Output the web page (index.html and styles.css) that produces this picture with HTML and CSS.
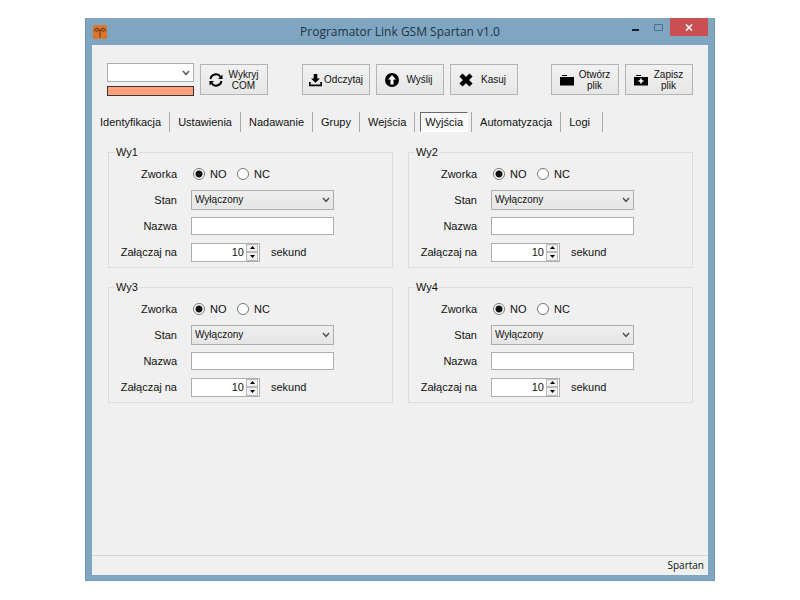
FILE: index.html
```html
<!DOCTYPE html>
<html lang="pl">
<head>
    <meta charset="UTF-8">
    <meta name="viewport" content="width=device-width, initial-scale=1.0">
    <title>Programator Link GSM Spartan v1.0</title>
    <link rel="stylesheet" href="styles.css">
</head>
<body>
    <svg width="0" height="0" class="defs" aria-hidden="true">
        <symbol id="chevron" viewBox="0 0 8 6"><path d="M1 1l3 3.400L7 1" fill="none" stroke="#505050" stroke-width="1.500"/></symbol>
        <symbol id="arrow-up" viewBox="0 0 5 3"><path d="M0 3L2.500 0L5 3z"/></symbol>
        <symbol id="arrow-down" viewBox="0 0 5 3"><path d="M0 0L2.500 3L5 0z"/></symbol>
    </svg>

    <div class="window">
        <header class="titlebar">
            <svg class="app-icon" width="14" height="14" viewBox="0 0 14 14">
                <rect width="14" height="14" rx="1" fill="#d9772f"/>
                <path d="M1.500 6.500Q2 3 5 3.500Q6.500 4 6.500 6.500M12.500 6.500Q12 3 9 3.500Q7.500 4 7.500 6.500M3.500 7Q4 5 5.500 5.500M10.500 7Q10 5 8.500 5.500M7 5.500V12.500" fill="none" stroke="#7d3d12" stroke-width="1.200"/>
            </svg>
            <h1>Programator Link GSM Spartan v1.0</h1>
            <div class="window-buttons">
                <button type="button" aria-label="Minimalizuj"><svg width="8" height="8" viewBox="0 0 8 8"><path d="M0 6h7v2H0z" fill="#14202c"/></svg></button>
                <button type="button" aria-label="Maksymalizuj"><svg width="10" height="8" viewBox="0 0 10 8"><path d="M.5 1.500h8v6h-8z" fill="none" stroke="#4d6f8b"/></svg></button>
                <button type="button" class="close" aria-label="Zamknij"><svg width="8" height="8" viewBox="0 0 8 8"><path d="M1 1.500l6 6M7 1.500L1 7.500" stroke="#fff" stroke-width="1.600"/></svg></button>
            </div>
        </header>

        <main class="client">
            <div class="toolbar">
                <div class="port">
                    <div class="select">
                        <select aria-label="Port COM"><option></option></select>
                        <svg width="8" height="6"><use href="#chevron"/></svg>
                    </div>
                    <div class="port-status"></div>
                </div>
                <button type="button" class="tool">
                    <svg width="16" height="16" viewBox="0 0 16 16"><path d="M2.500 7A5.500 5.500 0 0 1 12.500 4.800M13.500 9A5.500 5.500 0 0 1 3.500 11.200" fill="none" stroke="#000" stroke-width="1.900"/><path d="M14.500 2.500v4.500H10zM1.500 13.500V9H6z"/></svg>
                    <span>Wykryj COM</span>
                </button>
                <button type="button" class="tool first">
                    <svg width="13" height="14" viewBox="0 0 13 14"><path d="M4.700 1h3.600v4.500H11L6.500 9.800 2 5.500h2.700zM0 9h1.700v2.500h9.600V9H13v4.200H0z"/></svg>
                    <span>Odczytaj</span>
                </button>
                <button type="button" class="tool">
                    <svg width="16" height="16" viewBox="0 0 16 16"><circle cx="8" cy="8" r="7"/><path d="M8 3L12 7.500H9.500V12.500h-3V7.500H4z" fill="#fff"/></svg>
                    <span>Wyślij</span>
                </button>
                <button type="button" class="tool">
                    <svg width="16" height="14" viewBox="0 0 16 14"><path d="M3 2l10 10M13 2L3 12" stroke="#000" stroke-width="4.500"/></svg>
                    <span>Kasuj</span>
                </button>
                <button type="button" class="tool file">
                    <svg width="16" height="12" viewBox="0 0 16 12"><path d="M3 1h5v1H3zM1 3h14v8.500H1z"/></svg>
                    <span>Otwórz plik</span>
                </button>
                <button type="button" class="tool">
                    <svg width="16" height="12" viewBox="0 0 16 12"><path d="M3 1h5v1H3zM1 3h14v8.500H1z"/><path d="M8 4.500v5M5.500 7h5" stroke="#fff" stroke-width="1.600"/></svg>
                    <span>Zapisz plik</span>
                </button>
            </div>

            <nav class="tabs">
                <a href="#">Identyfikacja</a>
                <a href="#">Ustawienia</a>
                <a href="#">Nadawanie</a>
                <a href="#">Grupy</a>
                <a href="#">Wejścia</a>
                <a href="#" class="active" aria-current="page"><span>Wyjścia</span></a>
                <a href="#">Automatyzacja</a>
                <a href="#">Logi</a>
            </nav>

            <form class="outputs">
                <fieldset>
                    <legend>Wy1</legend>
                    <div class="row">
                        <span class="name">Zworka</span>
                        <label class="radio"><input type="radio" name="zworka1" checked>NO</label>
                        <label class="radio"><input type="radio" name="zworka1">NC</label>
                    </div>
                    <div class="row">
                        <label class="name" for="stan1">Stan</label>
                        <div class="select grey">
                            <select id="stan1"><option>Wyłączony</option></select>
                            <svg width="8" height="6"><use href="#chevron"/></svg>
                        </div>
                    </div>
                    <div class="row">
                        <label class="name" for="nazwa1">Nazwa</label>
                        <input type="text" id="nazwa1">
                    </div>
                    <div class="row">
                        <label class="name" for="czas1">Załączaj na</label>
                        <div class="spinner">
                            <input type="number" id="czas1" value="10">
                            <div class="steps">
                                <button type="button" aria-label="Więcej"><svg width="5" height="3"><use href="#arrow-up"/></svg></button>
                                <button type="button" aria-label="Mniej"><svg width="5" height="3"><use href="#arrow-down"/></svg></button>
                            </div>
                        </div>
                        <span>sekund</span>
                    </div>
                </fieldset>

                <fieldset>
                    <legend>Wy2</legend>
                    <div class="row">
                        <span class="name">Zworka</span>
                        <label class="radio"><input type="radio" name="zworka2" checked>NO</label>
                        <label class="radio"><input type="radio" name="zworka2">NC</label>
                    </div>
                    <div class="row">
                        <label class="name" for="stan2">Stan</label>
                        <div class="select grey">
                            <select id="stan2"><option>Wyłączony</option></select>
                            <svg width="8" height="6"><use href="#chevron"/></svg>
                        </div>
                    </div>
                    <div class="row">
                        <label class="name" for="nazwa2">Nazwa</label>
                        <input type="text" id="nazwa2">
                    </div>
                    <div class="row">
                        <label class="name" for="czas2">Załączaj na</label>
                        <div class="spinner">
                            <input type="number" id="czas2" value="10">
                            <div class="steps">
                                <button type="button" aria-label="Więcej"><svg width="5" height="3"><use href="#arrow-up"/></svg></button>
                                <button type="button" aria-label="Mniej"><svg width="5" height="3"><use href="#arrow-down"/></svg></button>
                            </div>
                        </div>
                        <span>sekund</span>
                    </div>
                </fieldset>

                <fieldset>
                    <legend>Wy3</legend>
                    <div class="row">
                        <span class="name">Zworka</span>
                        <label class="radio"><input type="radio" name="zworka3" checked>NO</label>
                        <label class="radio"><input type="radio" name="zworka3">NC</label>
                    </div>
                    <div class="row">
                        <label class="name" for="stan3">Stan</label>
                        <div class="select grey">
                            <select id="stan3"><option>Wyłączony</option></select>
                            <svg width="8" height="6"><use href="#chevron"/></svg>
                        </div>
                    </div>
                    <div class="row">
                        <label class="name" for="nazwa3">Nazwa</label>
                        <input type="text" id="nazwa3">
                    </div>
                    <div class="row">
                        <label class="name" for="czas3">Załączaj na</label>
                        <div class="spinner">
                            <input type="number" id="czas3" value="10">
                            <div class="steps">
                                <button type="button" aria-label="Więcej"><svg width="5" height="3"><use href="#arrow-up"/></svg></button>
                                <button type="button" aria-label="Mniej"><svg width="5" height="3"><use href="#arrow-down"/></svg></button>
                            </div>
                        </div>
                        <span>sekund</span>
                    </div>
                </fieldset>

                <fieldset>
                    <legend>Wy4</legend>
                    <div class="row">
                        <span class="name">Zworka</span>
                        <label class="radio"><input type="radio" name="zworka4" checked>NO</label>
                        <label class="radio"><input type="radio" name="zworka4">NC</label>
                    </div>
                    <div class="row">
                        <label class="name" for="stan4">Stan</label>
                        <div class="select grey">
                            <select id="stan4"><option>Wyłączony</option></select>
                            <svg width="8" height="6"><use href="#chevron"/></svg>
                        </div>
                    </div>
                    <div class="row">
                        <label class="name" for="nazwa4">Nazwa</label>
                        <input type="text" id="nazwa4">
                    </div>
                    <div class="row">
                        <label class="name" for="czas4">Załączaj na</label>
                        <div class="spinner">
                            <input type="number" id="czas4" value="10">
                            <div class="steps">
                                <button type="button" aria-label="Więcej"><svg width="5" height="3"><use href="#arrow-up"/></svg></button>
                                <button type="button" aria-label="Mniej"><svg width="5" height="3"><use href="#arrow-down"/></svg></button>
                            </div>
                        </div>
                        <span>sekund</span>
                    </div>
                </fieldset>
            </form>

            <footer class="statusbar">Spartan</footer>
        </main>
    </div>
</body>
</html>
```
FILE: styles.css
```css
* {
    margin: 0;
    padding: 0;
    box-sizing: border-box;
}

body {
    display: flex;
    min-height: 100vh;
    padding: 18px 85px 19px;
    background-color: #fff;
    color: #111;
    font-family: "Liberation Sans", Arial, sans-serif;
    font-size: 11px;
    line-height: 14px;
}

button, input, select {
    font: inherit;
    color: inherit;
    border-radius: 0;
}

svg {
    display: block;
    flex: none;
}

.defs {
    position: absolute;
}

.window {
    flex: 1;
    display: flex;
    flex-direction: column;
    padding: 0 6px 5px;
    background-color: #7fa5c0;
    border: 1px solid #7397b0;
    border-top: 0;
}

/* title bar */
.titlebar {
    display: grid;
    grid-template-columns: 1fr auto 1fr;
    height: 27px;
    align-items: center;
}

.app-icon {
    margin-left: 1px;
}

.titlebar h1 {
    font-family: "Open Sans", "Noto Sans", sans-serif;
    font-size: 12px;
    font-weight: normal;
    color: #1d3448;
}

.window-buttons {
    display: flex;
    align-self: start;
    justify-content: flex-end;
}

.window-buttons button {
    display: flex;
    align-items: center;
    justify-content: center;
    width: 23px;
    height: 18px;
    background: none;
    border: 0;
}

.window-buttons .close {
    width: 38px;
    background-color: #c94f52;
}

.client {
    flex: 1;
    display: flex;
    flex-direction: column;
    background-color: #f0f0f0;
}

/* toolbar */
.toolbar {
    display: flex;
    gap: 6px;
    padding: 18px 15px 0;
}

.port {
    width: 87px;
}

.port-status {
    height: 10px;
    margin-top: 4px;
    background-color: #ffa07a;
    border: 1px solid #333;
}

.tool {
    display: flex;
    align-items: center;
    width: 68px;
    height: 31px;
    margin-top: 1px;
    padding: 0 4px 0 7px;
    background: linear-gradient(#f1f1f1, #e6e6e6);
    border: 1px solid #b4b4b4;
    font-size: 10px;
    line-height: 11px;
}

.tool span {
    flex: 1;
    text-align: center;
}

.tool.first {
    margin-left: 28px;
    padding: 0 4px 0 6px;
}

.tool.file {
    margin-left: auto;
}

/* tabs */
.tabs {
    display: flex;
    margin-top: 16px;
}

.tabs a {
    height: 20px;
    padding: 0 8px;
    border-right: 1px solid #a8a8a8;
    color: inherit;
    line-height: 20px;
    text-decoration: none;
}

.tabs a:last-child {
    padding-right: 12px;
}

.tabs a.active {
    padding: 0 3px 0 5px;
}

.tabs .active span {
    display: block;
    padding: 0 4px;
    background-color: #f8f8f8;
    border: 1px solid #fff;
    border-top-color: #696969;
    border-left-color: #696969;
    line-height: 18px;
}

/* output groups */
.outputs {
    display: grid;
    grid-template-columns: 1fr 1fr;
    gap: 12px 15px;
    padding: 13px 15px 16px 16px;
}

fieldset {
    min-width: 0;
    padding: 2px 0;
    border: 1px solid #dcdcdc;
}

legend {
    margin-left: 6px;
    padding: 0 1px;
}

.row {
    display: flex;
    align-items: center;
    height: 26px;
}

.name {
    width: 68px;
    margin-right: 14px;
    text-align: right;
}

.radio {
    display: flex;
    align-items: center;
    width: 44px;
    gap: 5px;
    padding-left: 2px;
}

.radio input {
    appearance: none;
    width: 12px;
    height: 12px;
    background-color: #fff;
    border: 1px solid #777;
    border-radius: 50%;
}

.radio input:checked {
    background-image: radial-gradient(circle, #111 3px, #fff 4px);
}

.select {
    position: relative;
}

.select select {
    appearance: none;
    display: block;
    width: 100%;
    height: 19px;
    padding: 0 16px 0 3px;
    background-color: #fff;
    border: 1px solid #adadad;
}

.select svg {
    position: absolute;
    top: 7px;
    right: 4px;
}

.select.grey {
    width: 143px;
}

.grey select {
    height: 20px;
    background: linear-gradient(#efefef, #e5e5e5);
    font-size: 10px;
}

.row input[type="text"] {
    width: 143px;
    height: 18px;
    padding: 0 3px;
    background-color: #fff;
    border: 1px solid #adadad;
}

.spinner {
    display: flex;
    width: 69px;
    height: 19px;
    margin-right: 11px;
    background-color: #fff;
    border: 1px solid #adadad;
}

.spinner input {
    appearance: textfield;
    flex: 1;
    min-width: 0;
    padding-right: 1px;
    background: none;
    border: 0;
    text-align: right;
}

.spinner input::-webkit-inner-spin-button {
    display: none;
}

.steps {
    display: flex;
    flex-direction: column;
    width: 14px;
    padding: 0 1px;
}

.steps button {
    flex: 1;
    display: flex;
    align-items: center;
    justify-content: center;
    background-color: #f0f0f0;
    border: 1px solid #bbb;
}

/* status bar */
.statusbar {
    height: 20px;
    margin-top: auto;
    padding-right: 4px;
    border-top: 1px solid #d9d9d9;
    font-family: "Open Sans", "Noto Sans", sans-serif;
    font-size: 10px;
    line-height: 18px;
    text-align: right;
}
```
